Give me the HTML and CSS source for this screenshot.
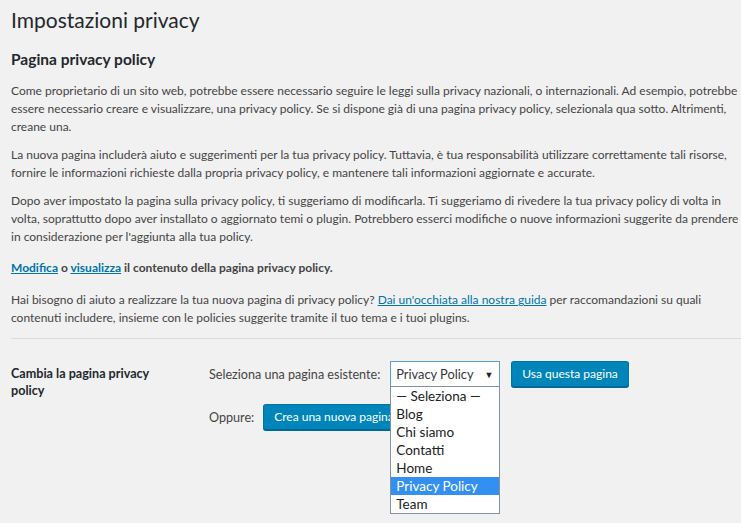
FILE: index.html
```html
<!DOCTYPE html>
<html lang="it">
<head>
<meta charset="utf-8">
<title>Impostazioni privacy</title>
<link rel="stylesheet" href="styles.css">
</head>
<body>
<div class="wrap">
  <h1 class="title">Impostazioni privacy</h1>
  <h2 class="subtitle">Pagina privacy policy</h2>
  <p class="lines">Come proprietario di un sito web, potrebbe essere necessario seguire le leggi sulla privacy nazionali, o internazionali. Ad esempio, potrebbe<br>essere necessario creare e visualizzare, una privacy policy. Se si dispone già di una pagina privacy policy, selezionala qua sotto. Altrimenti,<br>creane una.</p>
  <p class="lines">La nuova pagina includerà aiuto e suggerimenti per la tua privacy policy. Tuttavia, è tua responsabilità utilizzare correttamente tali risorse,<br>fornire le informazioni richieste dalla propria privacy policy, e mantenere tali informazioni aggiornate e accurate.</p>
  <p class="lines">Dopo aver impostato la pagina sulla privacy policy, ti suggeriamo di modificarla. Ti suggeriamo di rivedere la tua privacy policy di volta in<br>volta, soprattutto dopo aver installato o aggiornato temi o plugin. Potrebbero esserci modifiche o nuove informazioni suggerite da prendere<br>in considerazione per l'aggiunta alla tua policy.</p>
  <p class="strong"><a href="#">Modifica</a> o <a href="#">visualizza</a> il contenuto della pagina privacy policy.</p>
  <p class="lines">Hai bisogno di aiuto a realizzare la tua nuova pagina di privacy policy? <a href="#">Dai un'occhiata alla nostra guida</a> per raccomandazioni su quali<br>contenuti includere, insieme con le policies suggerite tramite il tuo tema e i tuoi plugins.</p>
  <hr class="divider">
  <div class="form-row">
    <div class="row-label">Cambia la pagina privacy policy</div>
    <div class="row-fields">
      <div class="field-line">
        <span class="field-label">Seleziona una pagina esistente:</span>
        <div class="select-wrap">
          <div class="select-box"><span>Privacy Policy</span><span class="arrow">▼</span></div>
          <ul class="dropdown">
            <li>— Seleziona —</li>
            <li>Blog</li>
            <li>Chi siamo</li>
            <li>Contatti</li>
            <li>Home</li>
            <li class="selected">Privacy Policy</li>
            <li>Team</li>
          </ul>
        </div>
        <button class="btn">Usa questa pagina</button>
      </div>
      <div class="field-line">
        <span class="field-label">Oppure:</span>
        <button class="btn">Crea una nuova pagina</button>
      </div>
    </div>
  </div>
</div>
</body>
</html>
```
FILE: styles.css
```css
html, body {
  margin: 0;
  padding: 0;
  background: #f1f1f1;
}
body {
  font-family: Lato, "Open Sans", sans-serif;
  font-size: 12px;
  color: #444;
  min-height: 523px;
}
.wrap {
  padding: 0 0 0 11px;
  overflow-x: hidden;
  min-height: 523px;
  box-sizing: border-box;
}
.title {
  font-size: 21px;
  font-weight: 400;
  color: #23282d;
  margin: 0;
  padding: 6px 0 0;
  line-height: 28px;
}
.subtitle {
  font-size: 15.5px;
  font-weight: 700;
  color: #23282d;
  margin: 14px 0 0;
  line-height: 22px;
}
p {
  margin: 10px 0 0;
  line-height: 18px;
}
.lines {
  white-space: nowrap;
}
.wrap > p:first-of-type {
  margin-top: 12px;
}
.strong {
  font-weight: 700;
  font-size: 12px;
  margin-top: 13px;
}
.strong + p {
  margin-top: 14px;
}
a {
  color: #0073aa;
  text-decoration: underline;
}
.divider {
  border: 0;
  border-top: 1px solid #ddd;
  margin: 11px 0 0;
  height: 0;
}
.form-row {
  display: flex;
  padding-top: 21px;
}
.row-label {
  width: 160px;
  flex: none;
  margin-right: 38px;
  font-weight: 700;
  font-size: 12.6px;
  color: #23282d;
  line-height: 17px;
  padding-top: 5px;
}
.row-fields {
  display: flex;
  flex-direction: column;
  gap: 17px;
  padding-top: 1px;
}
.field-line {
  display: flex;
  align-items: center;
  gap: 9px;
}
.field-label {
  font-size: 12.6px;
}
.select-wrap {
  position: relative;
  width: 110px;
  height: 26px;
  margin-left: 1px;
  margin-right: 2px;
}
.select-box {
  box-sizing: border-box;
  height: 26px;
  border: 1px solid #5b9dd9;
  background: #fff;
  display: flex;
  align-items: center;
  justify-content: space-between;
  padding: 0 6px 0 5px;
  color: #32373c;
  font-size: 12.8px;
}
.arrow {
  font-size: 9px;
  color: #222;
}
.dropdown {
  position: absolute;
  z-index: 5;
  left: 0;
  top: 25px;
  width: 110px;
  box-sizing: border-box;
  margin: 0;
  padding: 0;
  list-style: none;
  background: #fff;
  border: 1px solid #8290a0;
}
.dropdown li {
  height: 18px;
  line-height: 18px;
  padding: 0 5px;
  color: #222;
  font-size: 13.5px;
}
.dropdown li.selected {
  background: #3390f0;
  color: #fff;
}
.btn {
  font-family: inherit;
  font-size: 12px;
  color: #fff;
  background: #0085ba;
  border: 1px solid #0073aa;
  border-bottom-color: #006799;
  box-shadow: 0 1px 0 #006799;
  border-radius: 3px;
  height: 26px;
  padding: 0 10px;
  line-height: 24px;
  cursor: pointer;
}
```
